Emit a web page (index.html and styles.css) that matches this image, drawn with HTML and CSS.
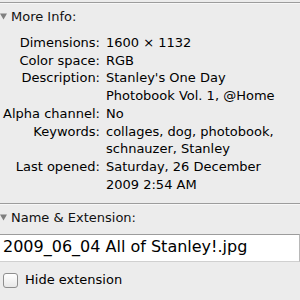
FILE: index.html
```html
<!DOCTYPE html>
<html>
<head>
<meta charset="utf-8">
<link rel="stylesheet" href="styles.css">
</head>
<body>
<div class="panel">
  <div class="section">
    <div class="head">
      <svg class="tri" width="7" height="7" viewBox="0 0 7 7"><polygon points="0,0.5 7,0.5 3.5,6.5" fill="#7f7f7f"/></svg>
      <span>More Info:</span>
    </div>
    <div class="info">
      <div class="lbl">Dimensions:</div><div class="val">1600 × 1132</div>
      <div class="lbl">Color space:</div><div class="val">RGB</div>
      <div class="lbl">Description:</div><div class="val">Stanley's One Day<br>Photobook Vol. 1, @Home</div>
      <div class="lbl">Alpha channel:</div><div class="val">No</div>
      <div class="lbl">Keywords:</div><div class="val">collages, dog, photobook,<br>schnauzer, Stanley</div>
      <div class="lbl">Last opened:</div><div class="val">Saturday, 26 December<br>2009 2:54 AM</div>
    </div>
  </div>
  <div class="section second">
    <div class="head">
      <svg class="tri" width="7" height="7" viewBox="0 0 7 7"><polygon points="0,0.5 7,0.5 3.5,6.5" fill="#7f7f7f"/></svg>
      <span>Name &amp; Extension:</span>
    </div>
    <div class="field">2009_06_04 All of Stanley!.jpg</div>
    <label class="check"><span class="box"></span><span>Hide extension</span></label>
  </div>
</div>
</body>
</html>
```
FILE: styles.css
```css
html, body {
  margin: 0;
  padding: 0;
  background: #ececec;
}
body {
  font-family: "DejaVu Sans", "Noto Sans", sans-serif;
  font-size: 13px;
  color: #000;
  width: 300px;
  height: 300px;
  overflow: hidden;
}
.panel {
  padding-top: 2px;
}
.section {
  border-top: 1px solid #9c9c9c;
  box-shadow: inset 0 1px 0 #f7f7f7;
}
.head {
  display: flex;
  align-items: center;
  padding: 5px 0 0 0;
  line-height: 18px;
  color: #111;
}
.tri {
  display: block;
  margin: 0 4px 1px 0;
}
.info {
  display: grid;
  grid-template-columns: 100px 1fr;
  column-gap: 6px;
  padding-top: 8px;
  padding-bottom: 10px;
  line-height: 17.7px;
}
.lbl {
  text-align: right;
}
.second .head {
  padding-bottom: 7px;
}
.field {
  background: #fff;
  border-top: 1px solid #9c9c9c;
  border-bottom: 1px solid #d0d0d0;
  border-right: 1px solid #b8b8b8;
  font-size: 16px;
  line-height: 23px;
  padding: 0 3px 3px 3px;
  color: #000;
}
.check {
  display: flex;
  align-items: center;
  gap: 7px;
  padding: 10px 0 14px 3px;
  line-height: 16px;
  border-bottom: 1px solid #9c9c9c;
}
.box {
  width: 13px;
  height: 13px;
  border: 1px solid #8e8e8e;
  border-radius: 3px;
  background: linear-gradient(#ffffff, #e8e8e8);
}
```
